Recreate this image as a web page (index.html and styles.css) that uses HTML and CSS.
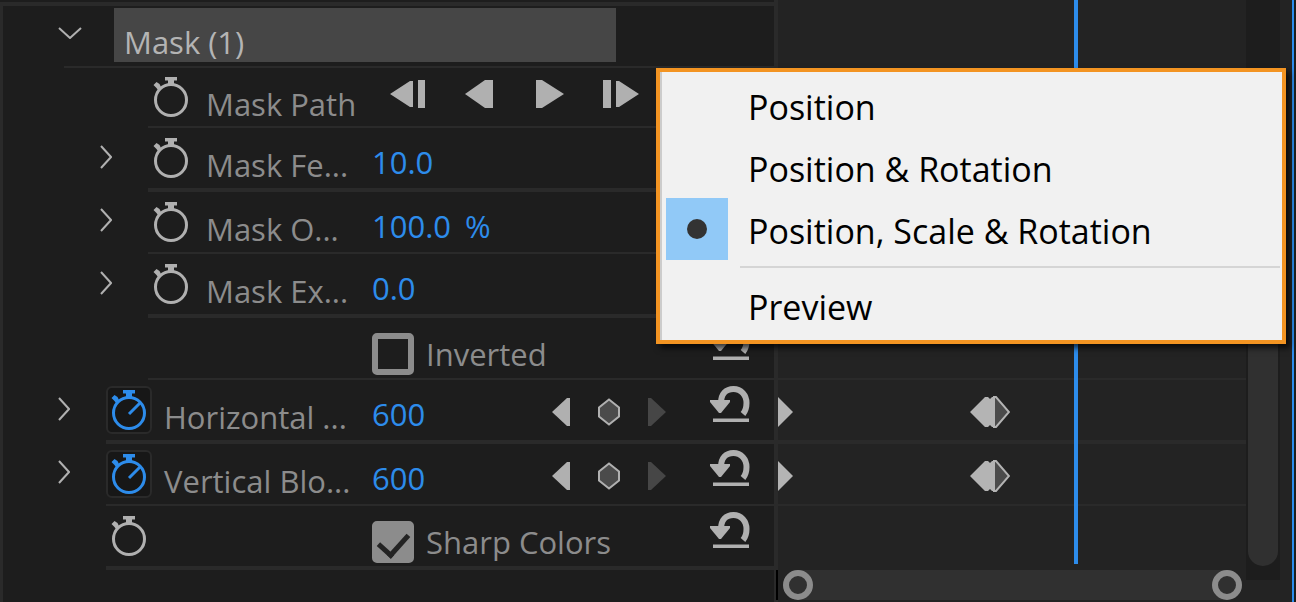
FILE: index.html
```html
<!DOCTYPE html>
<html lang="en">
<head>
    <meta charset="UTF-8">
    <meta name="viewport" content="width=device-width, initial-scale=1.0">
    <title>Effect Controls</title>
    <link rel="stylesheet" href="styles.css">
</head>
<body>
    <!-- Shared icons -->
    <svg class="sprite" aria-hidden="true">
        <symbol id="stopwatch" viewBox="0 0 36 40">
            <circle cx="18" cy="23" r="15.5" fill="none" stroke="currentColor" stroke-width="3"/>
            <path d="M12 0h12v3.5h-3V8h-6V3.500h-3z" fill="currentColor"/>
            <path d="M0.500 8l3-3 3 2 2 4-3 3-2-3z" fill="currentColor"/>
        </symbol>
        <symbol id="stopwatch-on" viewBox="0 0 36 40">
            <circle cx="18" cy="23" r="15.5" fill="none" stroke="currentColor" stroke-width="3"/>
            <path d="M12 0h12v3.5h-3V8h-6V3.500h-3z" fill="currentColor"/>
            <path d="M0.500 8l3-3 3 2 2 4-3 3-2-3z" fill="currentColor"/>
            <path d="M18 24L29 13" stroke="currentColor" stroke-width="3"/>
        </symbol>
        <symbol id="twirl" viewBox="0 0 12 24">
            <path d="M1 1l10 11L1 23" fill="none" stroke="currentColor" stroke-width="2"/>
        </symbol>
        <symbol id="reset" viewBox="0 0 40 36">
            <path d="M11 17C11 8 16 3 23.500 3S36.500 9 36.500 17c0 5-1 8-3.500 11" fill="none" stroke="currentColor" stroke-width="6"/>
            <path d="M0 14h20v2l-9 11H9L0 16z" fill="currentColor"/>
            <path d="M3 32.500h36v3.500H3z" fill="currentColor"/>
        </symbol>
        <symbol id="key-prev" viewBox="0 0 20 28">
            <path d="M1 14L16 0h3v28h-3z" fill="currentColor"/>
        </symbol>
        <symbol id="key-next" viewBox="0 0 20 28">
            <path d="M19 14L4 0H1v28h3z" fill="currentColor"/>
        </symbol>
        <symbol id="key-add" viewBox="0 0 22 28">
            <path d="M11 1.500l10 8v9l-10 8-10-8v-9z" fill="#4b4b4b" stroke="currentColor" stroke-width="2"/>
        </symbol>
        <symbol id="key-start" viewBox="0 0 16 30">
            <path d="M0 0l15 15L0 30z" fill="currentColor"/>
        </symbol>
        <symbol id="key-pair" viewBox="0 0 40 32">
            <path d="M24 1l2 0 13 15-13 15h-2z" fill="#4b4b4b" stroke="currentColor" stroke-width="2"/>
            <path d="M0 16L15 1h3l2 2 2-2h2v30h-2l-2-2-2 2h-3z" fill="currentColor"/>
        </symbol>
    </svg>

    <div class="panel">
        <section class="properties">
            <div class="row row-mask">
                <div class="indent"></div>
                <div class="row-body">
                    <button class="twirl-open" aria-label="Collapse mask"><svg width="24" height="12" viewBox="0 0 24 12"><path d="M1 1l11 10L23 1" fill="none" stroke="currentColor" stroke-width="2"/></svg></button>
                    <div class="mask-name">Mask (1)</div>
                </div>
            </div>

            <div class="row row-child row-path">
                <div class="indent"></div>
                <div class="row-body">
                    <button class="stopwatch" aria-label="Animate Mask Path"><svg width="36" height="40"><use href="#stopwatch"/></svg></button>
                    <span class="name">Mask Path</span>
                    <div class="tracking">
                        <button aria-label="Track back one frame"><svg width="36" height="28" viewBox="0 0 36 28"><path d="M0 14L20 1h3v26h-3zM28 0h7v28h-7z" fill="currentColor"/></svg></button>
                        <button aria-label="Track backward"><svg width="28" height="28" viewBox="0 0 28 28"><path d="M0 14L20 0h8v28h-8z" fill="currentColor"/></svg></button>
                        <button aria-label="Track forward"><svg width="28" height="28" viewBox="0 0 28 28"><path d="M28 14L6 0H0v28h6z" fill="currentColor"/></svg></button>
                        <button aria-label="Track forward one frame"><svg width="36" height="28" viewBox="0 0 36 28"><path d="M36 14L16 1h-3v26h3zM0 0h8v28H0z" fill="currentColor"/></svg></button>
                    </div>
                </div>
            </div>

            <div class="row row-child">
                <div class="indent"><button class="twirl" aria-label="Expand Mask Feather"><svg width="12" height="24"><use href="#twirl"/></svg></button></div>
                <div class="row-body">
                    <button class="stopwatch" aria-label="Animate Mask Feather"><svg width="36" height="40"><use href="#stopwatch"/></svg></button>
                    <span class="name">Mask Fe...</span>
                    <button class="value">10.0</button>
                </div>
            </div>

            <div class="row row-child">
                <div class="indent"><button class="twirl" aria-label="Expand Mask Opacity"><svg width="12" height="24"><use href="#twirl"/></svg></button></div>
                <div class="row-body">
                    <button class="stopwatch" aria-label="Animate Mask Opacity"><svg width="36" height="40"><use href="#stopwatch"/></svg></button>
                    <span class="name">Mask O...</span>
                    <button class="value">100.0 <span class="unit">%</span></button>
                </div>
            </div>

            <div class="row row-child">
                <div class="indent"><button class="twirl" aria-label="Expand Mask Expansion"><svg width="12" height="24"><use href="#twirl"/></svg></button></div>
                <div class="row-body">
                    <button class="stopwatch" aria-label="Animate Mask Expansion"><svg width="36" height="40"><use href="#stopwatch"/></svg></button>
                    <span class="name">Mask Ex...</span>
                    <button class="value">0.0</button>
                </div>
            </div>

            <div class="row row-child">
                <div class="indent"></div>
                <div class="row-body">
                    <span class="stopwatch"></span>
                    <span class="name"></span>
                    <div class="check">
                        <input type="checkbox" id="inverted">
                        <label for="inverted">Inverted</label>
                    </div>
                    <button class="reset" aria-label="Reset mask"><svg width="40" height="36"><use href="#reset"/></svg></button>
                </div>
            </div>

            <div class="row">
                <div class="indent"><button class="twirl" aria-label="Expand Horizontal Blocks"><svg width="12" height="24"><use href="#twirl"/></svg></button></div>
                <div class="row-body">
                    <button class="stopwatch active" aria-label="Animate Horizontal Blocks"><svg width="36" height="40"><use href="#stopwatch-on"/></svg></button>
                    <span class="name">Horizontal ...</span>
                    <button class="value">600</button>
                    <div class="key-nav">
                        <button aria-label="Previous keyframe"><svg width="20" height="28"><use href="#key-prev"/></svg></button>
                        <button aria-label="Add keyframe"><svg width="22" height="28"><use href="#key-add"/></svg></button>
                        <button aria-label="Next keyframe" disabled><svg width="20" height="28"><use href="#key-next"/></svg></button>
                    </div>
                    <button class="reset" aria-label="Reset Horizontal Blocks"><svg width="40" height="36"><use href="#reset"/></svg></button>
                </div>
            </div>

            <div class="row">
                <div class="indent"><button class="twirl" aria-label="Expand Vertical Blocks"><svg width="12" height="24"><use href="#twirl"/></svg></button></div>
                <div class="row-body">
                    <button class="stopwatch active" aria-label="Animate Vertical Blocks"><svg width="36" height="40"><use href="#stopwatch-on"/></svg></button>
                    <span class="name">Vertical Blo...</span>
                    <button class="value">600</button>
                    <div class="key-nav">
                        <button aria-label="Previous keyframe"><svg width="20" height="28"><use href="#key-prev"/></svg></button>
                        <button aria-label="Add keyframe"><svg width="22" height="28"><use href="#key-add"/></svg></button>
                        <button aria-label="Next keyframe" disabled><svg width="20" height="28"><use href="#key-next"/></svg></button>
                    </div>
                    <button class="reset" aria-label="Reset Vertical Blocks"><svg width="40" height="36"><use href="#reset"/></svg></button>
                </div>
            </div>

            <div class="row">
                <div class="indent"></div>
                <div class="row-body">
                    <button class="stopwatch" aria-label="Animate Sharp Colors"><svg width="36" height="40"><use href="#stopwatch"/></svg></button>
                    <span class="name"></span>
                    <div class="check">
                        <input type="checkbox" id="sharpColors" checked>
                        <label for="sharpColors">Sharp Colors</label>
                    </div>
                    <button class="reset" aria-label="Reset Sharp Colors"><svg width="40" height="36"><use href="#reset"/></svg></button>
                </div>
            </div>
        </section>

        <section class="timeline">
            <div class="tracks">
                <div class="lane lane-plain"></div>
                <div class="lane lane-path"></div>
                <div class="lane"></div>
                <div class="lane"></div>
                <div class="lane"></div>
                <div class="lane"></div>
                <div class="lane">
                    <svg class="key-start" width="16" height="30"><use href="#key-start"/></svg>
                    <svg class="key-pair" width="40" height="32"><use href="#key-pair"/></svg>
                </div>
                <div class="lane">
                    <svg class="key-start" width="16" height="30"><use href="#key-start"/></svg>
                    <svg class="key-pair" width="40" height="32"><use href="#key-pair"/></svg>
                </div>
                <div class="lane lane-plain"></div>
                <div class="playhead"></div>
                <div class="zoom-area">
                    <div class="zoom-bar">
                        <button class="zoom-handle" aria-label="Zoom start"></button>
                        <button class="zoom-handle" aria-label="Zoom end"></button>
                    </div>
                </div>
            </div>
            <div class="scrollbar"><div class="scroll-thumb"></div></div>
        </section>

        <form class="menu">
            <label class="menu-item"><input type="radio" name="tracking">Position</label>
            <label class="menu-item"><input type="radio" name="tracking">Position &amp; Rotation</label>
            <label class="menu-item"><input type="radio" name="tracking" checked>Position, Scale &amp; Rotation</label>
            <hr>
            <button type="button" class="menu-item menu-preview">Preview</button>
        </form>
    </div>
</body>
</html>
```
FILE: styles.css
```css
* {
    box-sizing: border-box;
}
body {
    margin: 0;
    background-color: #1d1d1d;
    font-family: "Open Sans", "Noto Sans", sans-serif;
    font-size: 31px;
    line-height: 40px;
    color: #8c8c8c;
}
button {
    padding: 0;
    border: none;
    background: none;
    font: inherit;
    color: #b0b0b0;
    cursor: pointer;
}
svg {
    display: block;
}
.sprite {
    position: absolute;
    width: 0;
    height: 0;
}
.panel {
    position: relative;
    display: flex;
    min-height: 100vh;
    border-right: 2px solid #1d1d1d;
    overflow: hidden;
}

/* Property list */
.properties {
    flex: 1;
    min-width: 0;
    margin-top: 2px;
    border-top: 4px solid #2a2a2a;
    border-left: 3px solid #2a2a2a;
}
.row {
    display: flex;
}
.indent {
    flex: none;
    display: flex;
    align-items: center;
    justify-content: flex-end;
    width: 103px;
    padding-right: 36px;
}
.row-child .indent {
    width: 145px;
}
.row-mask .indent {
    width: 61px;
}
.row-body {
    flex: 1;
    min-width: 0;
    display: flex;
    align-items: center;
    height: 62px;
    border-bottom: 2px solid #2a2a2a;
}
.row:nth-child(odd) .row-body {
    height: 64px;
    border-bottom-width: 4px;
}
.row.row-mask .row-body {
    height: 62px;
    border-bottom-width: 2px;
}
.row-path .row-body {
    height: 60px;
}
.twirl {
    padding-bottom: 6px;
}
.twirl-open {
    margin: 0 32px 6px -6px;
}
.mask-name {
    flex: 1;
    height: 54px;
    margin: 0 158px 2px 0;
    padding: 14px 10px 0;
    background-color: #464646;
    color: #b4b4b4;
}
.stopwatch {
    flex: none;
    display: flex;
    align-items: center;
    justify-content: center;
    width: 46px;
    height: 48px;
    margin-right: 12px;
}
.stopwatch.active {
    background-color: #171717;
    border: 2px solid #2a2a2a;
    border-radius: 6px;
    color: #2d8ceb;
}
.name {
    flex: none;
    width: 208px;
    padding-top: 14px;
    white-space: nowrap;
}
.row-child .name {
    width: 166px;
}
.value {
    padding-top: 8px;
    color: #2d8ceb;
}
.unit {
    margin-left: 6px;
}
.tracking {
    display: flex;
    padding-bottom: 6px;
}
.tracking button {
    display: flex;
    justify-content: center;
    width: 71px;
}
.check {
    display: flex;
    align-items: center;
    gap: 12px;
    padding-top: 12px;
    white-space: nowrap;
}
.check input {
    appearance: none;
    display: grid;
    place-items: center;
    width: 42px;
    height: 42px;
    margin: 0;
    border: 6px solid #8c8c8c;
    border-radius: 5px;
}
.check input:checked {
    background-color: #8c8c8c;
}
.check input:checked::after {
    content: "";
    width: 14px;
    height: 24px;
    margin-bottom: 10px;
    border: solid #232323;
    border-width: 0 5px 5px 0;
    transform: rotate(42deg);
}
.key-nav {
    display: flex;
    margin-left: auto;
    margin-right: 29px;
    padding-top: 4px;
}
.key-nav button {
    display: flex;
    justify-content: center;
    width: 48px;
}
.key-nav button:disabled {
    color: #464646;
}
.reset {
    margin-right: 24px;
    padding-bottom: 12px;
}
.check + .reset {
    margin-left: auto;
}

/* Timeline */
.timeline {
    flex: none;
    display: flex;
    width: 520px;
    border-left: 4px solid #2a2a2a;
    border-right: 2px solid #2d8ceb;
    background-color: #232323;
}
.tracks {
    position: relative;
    flex: 1;
    padding-top: 6px;
}
.lane {
    position: relative;
    height: 62px;
    border-bottom: 2px solid #2a2a2a;
}
.lane:nth-child(odd) {
    height: 64px;
    border-bottom-width: 4px;
}
.lane.lane-plain {
    border-bottom-color: transparent;
}
.lane.lane-plain:first-child {
    height: 62px;
}
.lane-path {
    height: 60px;
}
.key-start,
.key-pair {
    position: absolute;
    color: #b4b4b4;
}
.key-start {
    top: 17px;
    left: 0;
}
.key-pair {
    top: 16px;
    left: 192px;
}
.playhead {
    position: absolute;
    top: 0;
    bottom: 38px;
    left: 296px;
    width: 4px;
    background-color: #2d8ceb;
}
.zoom-area {
    margin-left: -2px;
    padding: 0 4px 0 5px;
    border-left: 2px solid #000000;
}
.zoom-bar {
    display: flex;
    justify-content: space-between;
    border-radius: 15px;
    background-color: #303030;
}
.zoom-handle {
    width: 30px;
    height: 30px;
    border: 6px solid #8c8c8c;
    border-radius: 50%;
}
.scrollbar {
    width: 34px;
    margin: 0 12px 22px 0;
    padding: 0 2px 14px;
    background-color: #1d1d1d;
}
.scroll-thumb {
    height: 100%;
    border-radius: 15px;
    background: linear-gradient(#1d1d1d 120px, #303030 120px);
}

/* Tracking method menu */
.menu {
    position: absolute;
    top: 68px;
    right: 8px;
    width: 630px;
    padding: 2px 2px 4px 6px;
    border: 4px solid #f39422;
    background-color: #f1f1f1;
    box-shadow: inset 2px 0 #cccccc, 4px 4px 6px rgba(0, 0, 0, 0.7);
    color: #000000;
    font-size: 34px;
    line-height: 44px;
}
.menu-item {
    display: flex;
    align-items: center;
    gap: 20px;
    height: 62px;
    padding-top: 4px;
    white-space: nowrap;
}
.menu-item input {
    appearance: none;
    display: grid;
    place-items: center;
    width: 62px;
    height: 62px;
    margin: -4px 0 0;
}
.menu-item input:checked {
    background-color: #91c9f7;
}
.menu-item input:checked::after {
    content: "";
    width: 20px;
    height: 20px;
    border-radius: 50%;
    background-color: #333333;
}
.menu hr {
    height: 2px;
    margin: 6px 0 6px 74px;
    border: none;
    background-color: #d5d5d5;
}
.menu-preview {
    width: 100%;
    padding-left: 82px;
    color: #000000;
}
```
